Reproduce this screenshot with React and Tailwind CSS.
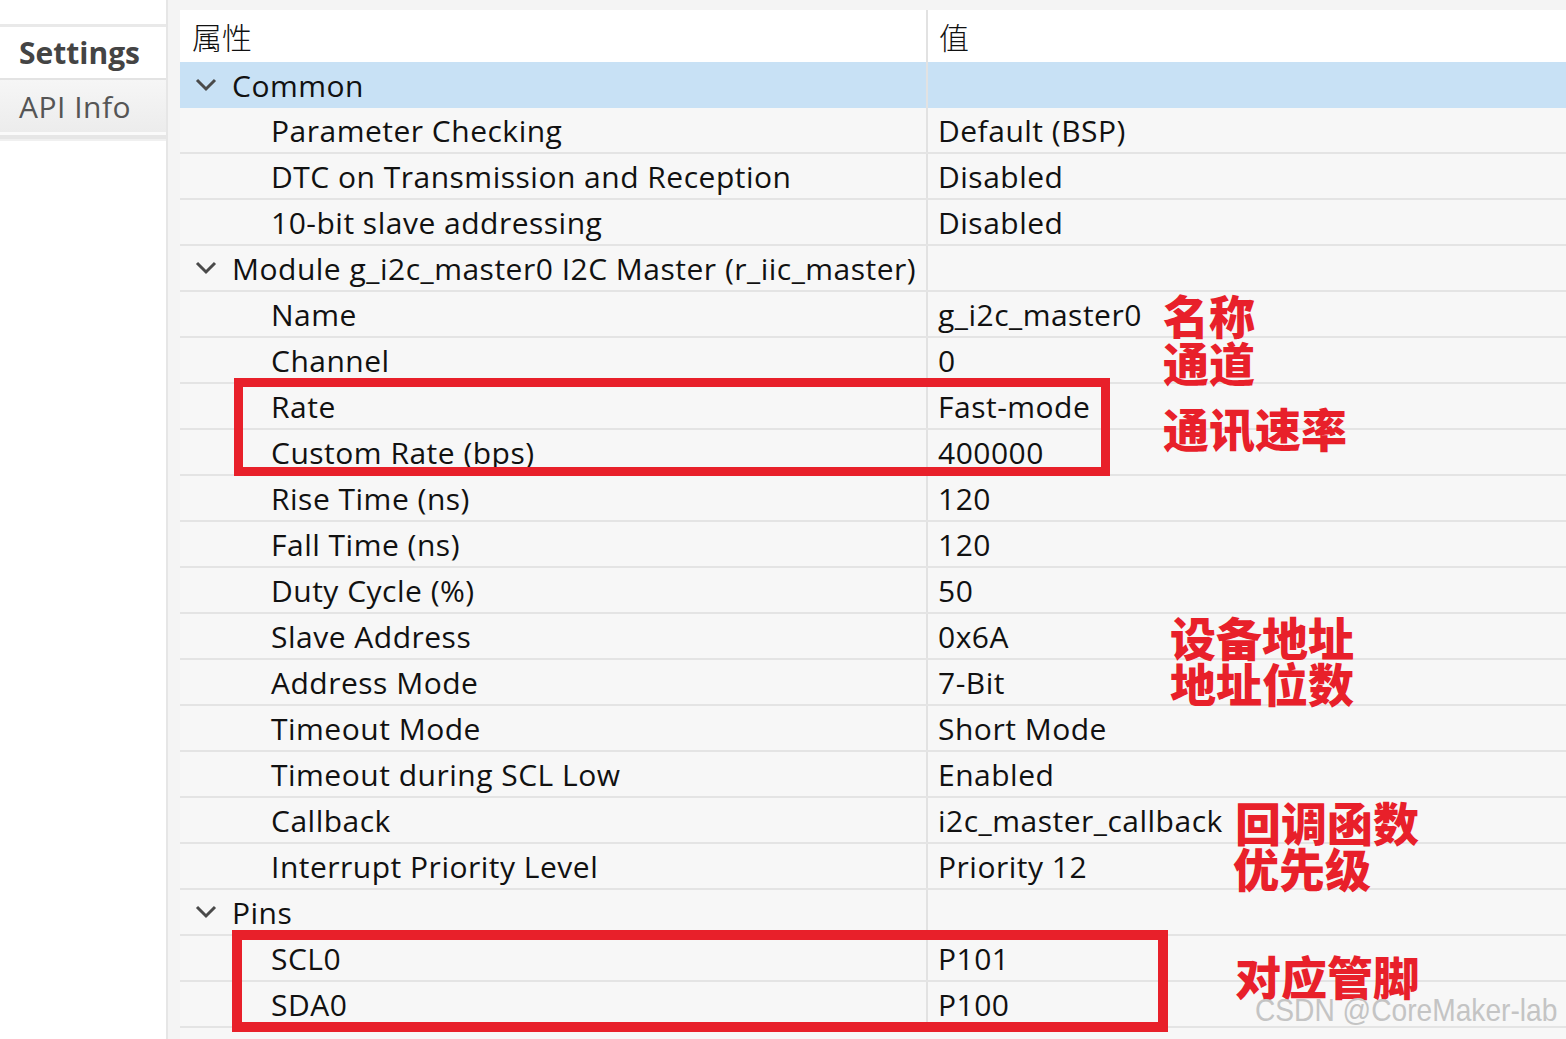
import React from "react";

const rows = [
  { label: "Common", group: true, selected: true },
  { label: "Parameter Checking", value: "Default (BSP)" },
  { label: "DTC on Transmission and Reception", value: "Disabled" },
  { label: "10-bit slave addressing", value: "Disabled" },
  { label: "Module g_i2c_master0 I2C Master (r_iic_master)", group: true },
  { label: "Name", value: "g_i2c_master0" },
  { label: "Channel", value: "0" },
  { label: "Rate", value: "Fast-mode" },
  { label: "Custom Rate (bps)", value: "400000" },
  { label: "Rise Time (ns)", value: "120" },
  { label: "Fall Time (ns)", value: "120" },
  { label: "Duty Cycle (%)", value: "50" },
  { label: "Slave Address", value: "0x6A" },
  { label: "Address Mode", value: "7-Bit" },
  { label: "Timeout Mode", value: "Short Mode" },
  { label: "Timeout during SCL Low", value: "Enabled" },
  { label: "Callback", value: "i2c_master_callback" },
  { label: "Interrupt Priority Level", value: "Priority 12" },
  { label: "Pins", group: true },
  { label: "SCL0", value: "P101" },
  { label: "SDA0", value: "P100" },
];

const notes = [
  { text: "名称", x: 1163, y: 291 },
  { text: "通道", x: 1163, y: 338 },
  { text: "通讯速率", x: 1163, y: 404 },
  { text: "设备地址", x: 1170, y: 613 },
  { text: "地址位数", x: 1170, y: 659 },
  { text: "回调函数", x: 1235, y: 798 },
  { text: "优先级", x: 1233, y: 844 },
  { text: "对应管脚", x: 1235, y: 952 },
];

function Chevron() {
  return (
    <svg width="22" height="14" viewBox="0 0 22 14" className="shrink-0">
      <path d="M2 2 L11 11 L20 2" fill="none" stroke="#4a4a4a" strokeWidth="3" />
    </svg>
  );
}

function Row({ row }) {
  return (
    <div
      className={`flex h-[46px] ${
        row.selected ? "bg-[#c8e1f5]" : "border-b-2 border-[#e4e4e4]"
      }`}
    >
      <div className="w-[746px] shrink-0 flex items-center overflow-hidden whitespace-nowrap">
        {row.group ? (
          <div className="flex items-center pl-[15px] gap-[15px]">
            <Chevron />
            <span>{row.label}</span>
          </div>
        ) : (
          <span className="pl-[91px]">{row.label}</span>
        )}
      </div>
      <div className="w-[2px] shrink-0 bg-[#e2e2e2]" />
      <div className="flex-1 flex items-center pl-[10px] whitespace-nowrap">
        {row.value}
      </div>
    </div>
  );
}

export default function App() {
  return (
    <div
      className="relative w-[1566px] h-[1039px] overflow-hidden bg-[#f4f4f4] flex text-[#111] text-[30px] tracking-[0.5px]"
      style={{ fontFamily: '"Open Sans", "Noto Sans CJK SC", sans-serif' }}
    >
      <div className="w-[168px] shrink-0 bg-white border-r-2 border-[#e6e6e6] flex flex-col tracking-normal">
        <div className="h-[24px]" />
        <div className="h-[3px] bg-[#e9e9e9]" />
        <div className="h-[51px] bg-white flex items-center pl-[19px] font-bold text-[#444] text-[30px]">
          Settings
        </div>
        <div className="h-[2px] bg-[#e3e3e3]" />
        <div className="h-[52px] bg-gradient-to-b from-[#f6f6f6] to-[#ececec] flex items-center pl-[19px] text-[#555] text-[30px] tracking-[0.5px]">
          API Info
        </div>
        <div className="h-[3px] bg-[#fafafa]" />
        <div className="h-[4px] bg-[#e6e6e6]" />
        <div className="h-[2px] bg-[#f0f0f0]" />
      </div>
      <div className="w-[12px] shrink-0" />
      <div className="flex-1 flex flex-col bg-[#f7f7f7]">
        <div className="h-[10px] bg-[#f4f4f4]" />
        <div
          className="h-[52px] bg-white flex text-[30px] tracking-normal"
          style={{ fontFamily: '"Noto Sans CJK SC", sans-serif' }}
        >
          <div className="w-[746px] shrink-0 flex items-center pl-[12px] font-light">属性</div>
          <div className="w-[2px] shrink-0 bg-[#e2e2e2]" />
          <div className="flex-1 flex items-center pl-[11px] font-light">值</div>
        </div>
        {rows.map((row) => (
          <Row key={row.label} row={row} />
        ))}
      </div>

      <div className="absolute left-[234px] top-[378px] w-[876px] h-[98px] border-[9px] border-[#e8202a]" />
      <div className="absolute left-[232px] top-[930px] w-[936px] h-[102px] border-[10px] border-[#e8202a]" />

      {notes.map((n) => (
        <div
          key={n.text}
          className="absolute text-[46px] leading-none font-black text-[#e8202a] whitespace-nowrap tracking-normal"
          style={{ left: n.x, top: n.y, fontFamily: '"Noto Sans CJK SC", sans-serif' }}
        >
          {n.text}
        </div>
      ))}
      <div
        className="absolute left-[1255px] top-[994px] text-[32px] leading-none text-[#c4c4c4] whitespace-nowrap tracking-normal origin-left scale-x-[0.88]"
        style={{ fontFamily: '"Liberation Sans", Arial, sans-serif' }}
      >
        CSDN @CoreMaker-lab
      </div>
    </div>
  );
}
